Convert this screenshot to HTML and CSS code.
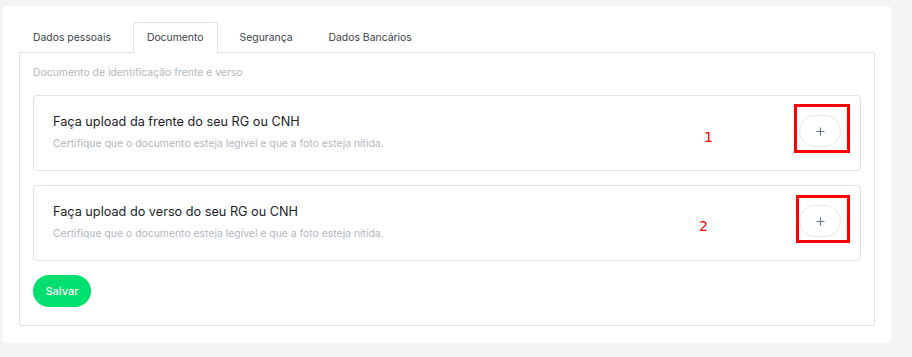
FILE: index.html
```html
<!DOCTYPE html>
<html lang="pt-BR">
<head>
<meta charset="utf-8">
<title>Documento</title>
<link rel="stylesheet" href="styles.css">
</head>
<body>
<div class="page">
  <div class="card">
    <div class="tabs">
      <div class="tab">Dados pessoais</div>
      <div class="tab active">Documento</div>
      <div class="tab">Segurança</div>
      <div class="tab">Dados Bancários</div>
    </div>
    <div class="panel">
      <p class="subtitle">Documento de identificação frente e verso</p>
      <div class="uploads">
        <div class="upload">
          <div class="upload-text">
            <div class="upload-title">Faça upload da frente do seu RG ou CNH</div>
            <div class="upload-desc">Certifique que o documento esteja legível e que a foto esteja nítida.</div>
          </div>
          <span class="note note-1">1</span>
          <div class="add-wrap">
            <button class="add" type="button" aria-label="Adicionar">
              <svg class="plus" width="9" height="9" viewBox="0 0 9 9"><path d="M4.5 0.5v8M0.5 4.5h8" stroke="#6b7190" stroke-width="1.1" fill="none"/></svg>
            </button>
            <span class="mark mark-1"></span>
          </div>
        </div>
        <div class="upload">
          <div class="upload-text">
            <div class="upload-title">Faça upload do verso do seu RG ou CNH</div>
            <div class="upload-desc">Certifique que o documento esteja legível e que a foto esteja nítida.</div>
          </div>
          <span class="note note-2">2</span>
          <div class="add-wrap">
            <button class="add" type="button" aria-label="Adicionar">
              <svg class="plus" width="9" height="9" viewBox="0 0 9 9"><path d="M4.5 0.5v8M0.5 4.5h8" stroke="#6b7190" stroke-width="1.1" fill="none"/></svg>
            </button>
            <span class="mark mark-2"></span>
          </div>
        </div>
      </div>
      <button class="save" type="button">Salvar</button>
    </div>
  </div>
</div>
</body>
</html>
```
FILE: styles.css
```css
html, body {
  margin: 0;
  padding: 0;
  background: #f4f4f4;
  font-family: Inter, "Noto Sans", sans-serif;
}

.page {
  padding: 6px 21px 14px 3px;
}

.card {
  background: #ffffff;
  border-radius: 4px;
  padding: 16px 16px 17px 16px;
}

.tabs {
  display: flex;
  gap: 8px;
  position: relative;
  z-index: 1;
}

.tab {
  height: 29px;
  line-height: 29px;
  padding: 0 13px;
  border: 1px solid transparent;
  border-bottom: none;
  font-size: 10.4px;
  color: #3d3f4a;
  border-radius: 4px 4px 0 0;
}

.tab.active {
  border-color: #dde2e8;
  background: #ffffff;
  margin-bottom: -1px;
  height: 30px;
}

.panel {
  border: 1px solid #dde2e8;
  border-radius: 0 2px 2px 2px;
  padding: 12px 13px 18px 13px;
}

.subtitle {
  margin: 0 0 14px 0;
  font-size: 10.4px;
  line-height: 16px;
  color: #b4b8c0;
}

.uploads {
  display: flex;
  flex-direction: column;
  gap: 14px;
}

.upload {
  position: relative;
  display: flex;
  align-items: flex-start;
  justify-content: space-between;
  border: 1px solid #dde2e8;
  border-radius: 4px;
  padding: 17px 19px 19px 19px;
}

.upload-title {
  font-size: 12.7px;
  line-height: 18px;
  color: #1c1c28;
}

.upload-desc {
  margin-top: 6px;
  font-size: 10.4px;
  line-height: 14px;
  color: #b3b7bf;
}

.add-wrap {
  position: relative;
  margin-top: 2px;
}

.add {
  display: flex;
  align-items: center;
  justify-content: center;
  width: 42px;
  height: 32px;
  border: 1px solid #e6e7ea;
  border-radius: 16px;
  background: #ffffff;
  padding: 0;
}

.plus {
  display: block;
}

.mark {
  position: absolute;
  border: 3px solid #ff0000;
}

.mark-1 {
  left: -5px;
  right: -9px;
  top: -11px;
  bottom: -6px;
}

.mark-2 {
  left: -3px;
  right: -9px;
  top: -10px;
  bottom: -6px;
}

.note {
  position: absolute;
  font-family: "DejaVu Sans", sans-serif;
  font-size: 14px;
  line-height: 16px;
  color: #ff0000;
}

.note-1 {
  left: 670px;
  top: 33px;
}

.note-2 {
  left: 665px;
  top: 32px;
}

.save {
  display: block;
  margin-top: 14px;
  width: 58px;
  height: 32px;
  border: none;
  border-radius: 16px;
  background: #00e06e;
  color: #ffffff;
  font-family: Inter, "Noto Sans", sans-serif;
  font-size: 11px;
  font-weight: 500;
  padding: 0;
}
```
